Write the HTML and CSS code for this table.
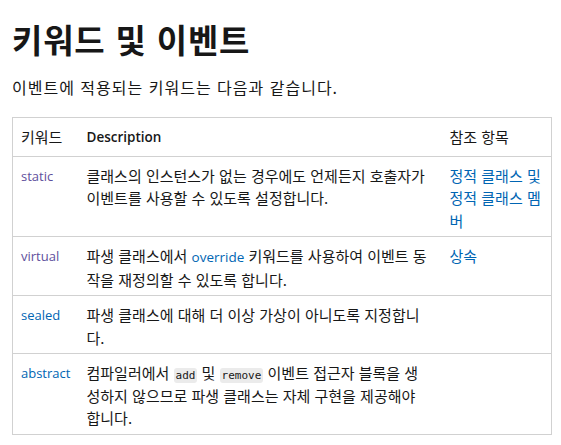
FILE: index.html
```html
<!DOCTYPE html>
<html lang="ko">
<head>
<meta charset="utf-8">
<link rel="stylesheet" href="styles.css">
</head>
<body>
<main class="content">
  <h1 class="title">키워드 및 이벤트</h1>
  <p class="intro">이벤트에 적용되는 키워드는 다음과 같습니다.</p>
  <table class="kw-table">
    <colgroup>
      <col class="c1"><col class="c2"><col class="c3">
    </colgroup>
    <thead>
      <tr><th class="ko">키워드</th><th>Description</th><th class="ko">참조 항목</th></tr>
    </thead>
    <tbody>
      <tr>
        <td><a class="link visited" href="#">static</a></td>
        <td class="desc">클래스의 인스턴스가 없는 경우에도 언제든지 호출자가 이벤트를 사용할 수 있도록 설정합니다.</td>
        <td><a class="link ko" href="#">정적 클래스 및 정적 클래스 멤버</a></td>
      </tr>
      <tr>
        <td><a class="link visited" href="#">virtual</a></td>
        <td class="desc">파생 클래스에서 <a class="link" href="#">override</a> 키워드를 사용하여 이벤트 동작을 재정의할 수 있도록 합니다.</td>
        <td><a class="link ko" href="#">상속</a></td>
      </tr>
      <tr>
        <td><a class="link" href="#">sealed</a></td>
        <td class="desc">파생 클래스에 대해 더 이상 가상이 아니도록 지정합니다.</td>
        <td></td>
      </tr>
      <tr>
        <td><a class="link" href="#">abstract</a></td>
        <td class="desc">컴파일러에서 <code class="code">add</code> 및 <code class="code">remove</code> 이벤트 접근자 블록을 생성하지 않으므로 파생 클래스는 자체 구현을 제공해야 합니다.</td>
        <td></td>
      </tr>
    </tbody>
  </table>
</main>
</body>
</html>
```
FILE: styles.css
```css
html, body {
  margin: 0;
  padding: 0;
  background: #ffffff;
}
body {
  font-family: "Open Sans", "Noto Sans CJK KR", sans-serif;
  color: #171717;
}
.content {
  padding: 0 11px 0 12px;
}
.title {
  margin: 0;
  padding-top: 19px;
  font-family: "Noto Sans CJK KR", sans-serif;
  font-size: 33px;
  font-weight: 700;
  line-height: 40px;
  letter-spacing: 0.8px;
  color: #171717;
}
.intro {
  margin: 17px 0 0 0;
  font-family: "Noto Sans CJK KR", sans-serif;
  font-size: 16px;
  line-height: 22px;
  letter-spacing: 1px;
  color: #171717;
}
.kw-table {
  margin-top: 19px;
  width: 539px;
  border-collapse: collapse;
  table-layout: fixed;
  border: 1px solid #d1d1d1;
  font-size: 15px;
  line-height: 22.5px;
}
.c1 { width: 66px; }
.c2 { width: 363px; }
.c3 { width: 110px; }
.kw-table th {
  text-align: left;
  font-weight: 600;
  font-size: 13.5px;
  padding: 8px 8px 7px 8px;
  border-bottom: 1px solid #d1d1d1;
  vertical-align: top;
}
.kw-table th.ko {
  font-family: "Noto Sans CJK KR", sans-serif;
  font-size: 15px;
  font-weight: 400;
}
.kw-table td {
  padding: 8px 8px 4px 8px;
  border-bottom: 1px solid #d1d1d1;
  vertical-align: top;
  font-family: "Noto Sans CJK KR", sans-serif;
  font-size: 15px;
  word-break: normal;
}
.kw-table td.desc {
  padding-right: 12px;
}
.kw-table td:first-child {
  font-family: "Open Sans", sans-serif;
  font-size: 13px;
}
.link {
  color: #0065b3;
  text-decoration: none;
  font-family: "Open Sans", sans-serif;
  font-size: 13.5px;
}
.kw-table td:first-child .link {
  font-size: 13px;
}
.link.ko {
  font-family: "Noto Sans CJK KR", sans-serif;
  font-size: 15px;
}
.link.visited {
  color: #5e4f9c;
}
.code {
  font-family: "DejaVu Sans Mono", monospace;
  font-size: 11px;
  line-height: 1;
  background: #ebebeb;
  border-radius: 3px;
  padding: 1px 2px;
  color: #171717;
}
```
